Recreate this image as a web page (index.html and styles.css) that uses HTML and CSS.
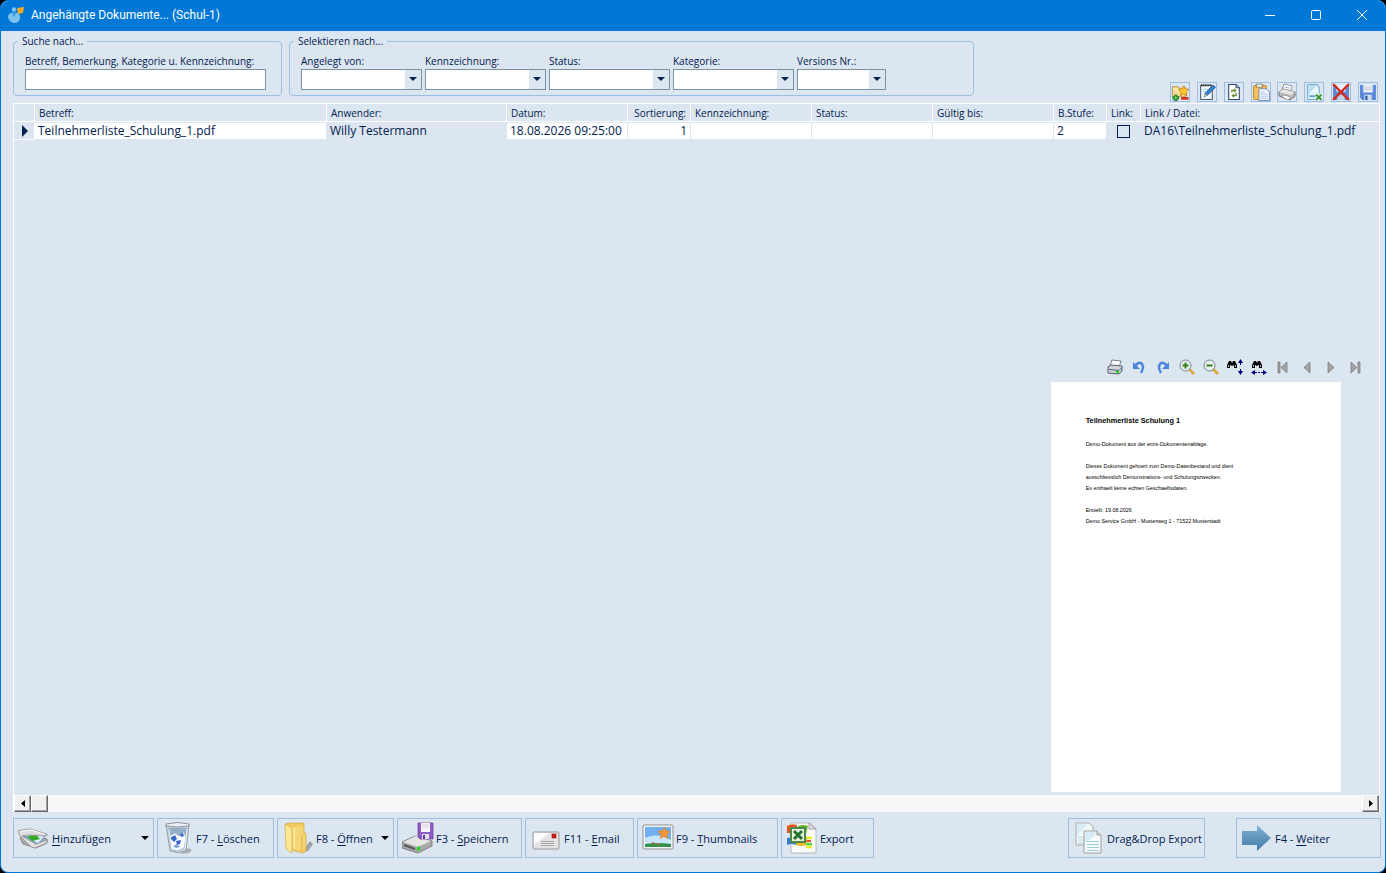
FILE: index.html
```
<!DOCTYPE html>
<html lang="de">
<head>
	<meta charset="utf-8">
	<title>Angehängte Dokumente... (Schul-1)</title>
	<link rel="stylesheet" href="styles.css">
</head>
<body>
<div class="window">
	<header class="titlebar">
		<svg class="app-icon" width="16" height="16" viewBox="0 0 16 16">
			<circle cx="6" cy="2.500" r="2.200" fill="#7cc3f0"/>
			<path d="M0 10Q0 5.500 6 5.500Q12 5.500 12 10Q12 16 6 16Q1 15 0 10Z" fill="#7cc3f0"/>
			<path d="M4 6l2 4 2-4z" fill="#3c9be0"/>
			<path d="M9 1l7-1-1 6-5 1z" fill="#f5a81c"/>
		</svg>
		<h1>Angehängte Dokumente... (Schul-1)</h1>
		<button class="win-btn" aria-label="Minimieren"><svg width="10" height="10"><path d="M0 5.500h10" stroke="#fff"/></svg></button>
		<button class="win-btn" aria-label="Maximieren"><svg width="10" height="10"><rect x=".5" y=".5" width="9" height="9" rx="1" fill="none" stroke="#fff"/></svg></button>
		<button class="win-btn" aria-label="Schließen"><svg width="10" height="10"><path d="M0 0l10 10M10 0L0 10" stroke="#fff"/></svg></button>
	</header>

	<div class="top">
		<fieldset class="search">
			<legend>Suche nach...</legend>
			<div class="field">
				<label for="suche">Betreff, Bemerkung, Kategorie u. Kennzeichnung:</label>
				<input type="text" id="suche">
			</div>
		</fieldset>
		<fieldset class="filter">
			<legend>Selektieren nach...</legend>
			<div class="field">
				<label for="angelegt">Angelegt von:</label>
				<div class="combo"><select id="angelegt"><option></option></select></div>
			</div>
			<div class="field">
				<label for="kennz">Kennzeichnung:</label>
				<div class="combo"><select id="kennz"><option></option></select></div>
			</div>
			<div class="field">
				<label for="status">Status:</label>
				<div class="combo"><select id="status"><option></option></select></div>
			</div>
			<div class="field">
				<label for="kategorie">Kategorie:</label>
				<div class="combo"><select id="kategorie"><option></option></select></div>
			</div>
			<div class="field small">
				<label for="version">Versions Nr.:</label>
				<div class="combo"><select id="version"><option></option></select></div>
			</div>
		</fieldset>
		<div class="tools">
			<button aria-label="Favorit">
				<svg width="18" height="18" viewBox="0 0 17 17">
					<path d="M1.500 3.500h5l1 1.500h6v8h-12z" fill="#f7dc96" stroke="#b49a5a"/>
					<path d="M2 6h9" stroke="#fff3c8"/>
					<path d="M12 2.500l1.500 3 3.500.5-2.500 2.500.5 3.500-3-1.700-3 1.700.5-3.500-2.500-2.500 3.500-.5z" fill="#ffc52e" stroke="#c98516" stroke-width=".8"/>
					<path d="M4.500 11v6M1.500 14h6" stroke="#187a1c" stroke-width="3"/><path d="M4.500 12v4M2.500 14h4" stroke="#7ed66b"/>
					<path d="M9.500 14.500h7" stroke="#d8321c" stroke-width="2.500"/>
				</svg>
			</button>
			<button aria-label="Bearbeiten">
				<svg width="18" height="18" viewBox="0 0 17 17">
					<rect x="2.500" y="2.500" width="11" height="13" fill="#f4faff" stroke="#4c5a66"/>
					<path d="M3 2h10" stroke="#333" stroke-width="2" stroke-dasharray="1 1"/>
					<path d="M5 6h6M5 8h4M5 10h3" stroke="#a9d1e6"/>
					<path d="M6 13l1-3.500L14 2l2.500 2L9 11.500z" fill="#3583cf" stroke="#164c86" stroke-width=".7"/><path d="M6 13l.7-2.500L8.500 12z" fill="#f0cf90"/>
				</svg>
			</button>
			<button aria-label="Aktualisieren">
				<svg width="18" height="18" viewBox="0 0 17 17">
					<path d="M3.500 1.500h7l3 3v11h-10z" fill="#fff" stroke="#2e4561"/><path d="M10.500 1.500v3h3" fill="#bad0e5" stroke="#2e4561"/>
					<path d="M6.500 9V7H9M10.500 9v3H8" fill="none" stroke="#628824" stroke-width="1.200"/><path d="M8.500 5L11 7 8.500 9zM8.500 10L6 12l2.500 2z" fill="#628824"/>
				</svg>
			</button>
			<button aria-label="Einfügen">
				<svg width="18" height="18" viewBox="0 0 17 17">
					<rect x="1.500" y="2.500" width="12" height="13" rx="1" fill="#f4c15a" stroke="#c58f2b"/>
					<rect x="4" y="1" width="6" height="3" fill="#e6e6e6" stroke="#8b8062" stroke-width=".8"/>
					<path d="M6.500 5.500h7l3 3v8h-10z" fill="#f2f7ff" stroke="#6881ad" stroke-width=".8"/><path d="M8 8.500h4M8 10.500h7M8 12.500h7M8 14.500h7" stroke="#a9bee0" stroke-width=".8"/>
				</svg>
			</button>
			<button aria-label="Drucken">
				<svg width="18" height="18" viewBox="0 0 18 18">
					<path d="M6 1l8 2-2 7-8-3z" fill="#fff" stroke="#8f969c"/>
					<path d="M1 9l4-3 12 3v4l-5 4L1 13z" fill="#bcbcbc" stroke="#6d6d6d"/><path d="M1 9l4-3 12 3-4 3z" fill="#e4e4e4"/>
					<path d="M3 13l3-1 7 2-3 3z" fill="#fff" stroke="#888" stroke-width=".7"/><path d="M6.500 4l5 1M6 6l5 1" stroke="#a5adb5"/>
				</svg>
			</button>
			<button aria-label="Excel Export">
				<svg width="18" height="18" viewBox="0 0 17 17">
					<path d="M2.500 1.500h9l2 3v11h-11z" fill="#e8f6fd" stroke="#7ba9c9"/><path d="M3 2h8L3 11z" fill="#b8dff4"/>
					<path d="M4 12.500h6" stroke="#62a4cf" stroke-width="2"/><rect x="10" y="10" width="6" height="6" fill="#d9efd2"/>
					<path d="M10.500 11l5 5M15.500 11l-5 5" stroke="#3b9136" stroke-width="1.800"/>
				</svg>
			</button>
			<button aria-label="Verwerfen">
				<svg width="18" height="18" viewBox="0 0 17 17">
					<path d="M1 2h15v14H3l-2-2z" fill="#5b88d8"/><path d="M4 2h9v6H4z" fill="#e9edf5"/><path d="M5 11h7v5H5z" fill="#c4d0e5"/>
					<path d="M1 1l15 15M16 1L1 16" stroke="#d22d20" stroke-width="2.200"/>
				</svg>
			</button>
			<button aria-label="Speichern">
				<svg width="18" height="18" viewBox="0 0 17 17">
					<path d="M1 2h15v14H3l-2-2z" fill="#5b88d8"/><path d="M4 2h9v7H4z" fill="#e9edf5"/><path d="M5 4h7M5 6h7" stroke="#c6cbd5"/><path d="M5 11h7v5H5z" fill="#d4dceb"/><path d="M6 12h2v4H6z" fill="#2a55a5"/>
				</svg>
			</button>
		</div>
	</div>

	<main class="grid">
		<table>
			<colgroup>
				<col class="c-mark"><col class="c-betreff"><col class="c-anwender"><col class="c-mid"><col class="c-sort"><col class="c-mid"><col class="c-mid"><col class="c-mid"><col class="c-stufe"><col class="c-link"><col>
			</colgroup>
			<thead>
				<tr>
					<th></th><th>Betreff:</th><th>Anwender:</th><th>Datum:</th><th class="num">Sortierung:</th><th>Kennzeichnung:</th><th>Status:</th><th>Gültig bis:</th><th>B.Stufe:</th><th>Link:</th><th>Link / Datei:</th>
				</tr>
			</thead>
			<tbody>
				<tr>
					<td class="mark"><svg width="6" height="12"><path d="M0 0l6 6-6 6z" fill="#00204f"/></svg></td>
					<td class="edit">Teilnehmerliste_Schulung_1.pdf</td>
					<td>Willy Testermann</td>
					<td class="edit">18.08.2026 09:25:00</td>
					<td class="edit num">1</td>
					<td class="edit"></td>
					<td class="edit"></td>
					<td class="edit"></td>
					<td class="edit">2</td>
					<td class="check"><input type="checkbox" aria-label="Link"></td>
					<td>DA16\Teilnehmerliste_Schulung_1.pdf</td>
				</tr>
			</tbody>
		</table>

		<section class="preview">
			<div class="preview-tools">
				<button aria-label="Drucken"><svg width="16" height="16" viewBox="0 0 16 16"><path d="M5 1l9 1-2 6-9-1z" fill="#fff" stroke="#7b8188"/><path d="M1 8l3-2 11 1v5l-3 3-11-1z" fill="#d0d5da" stroke="#59606a"/><path d="M2 10.500l10 1 3-3" fill="none" stroke="#59606a"/><path d="M9 12h3v2H9z" fill="#25d51e"/></svg></button>
				<button aria-label="Links drehen"><svg width="16" height="16" viewBox="0 0 16 16"><path d="M4 7q3-4 6-3 4 3 0 10" fill="none" stroke="#4a84dc" stroke-width="2.400"/><path d="M2 3v7h7z" fill="#4a84dc"/></svg></button>
				<button aria-label="Rechts drehen"><svg width="16" height="16" viewBox="0 0 16 16"><path d="M12 7q-3-4-6-3-4 3 0 10" fill="none" stroke="#4a84dc" stroke-width="2.400"/><path d="M14 3v7H7z" fill="#4a84dc"/></svg></button>
				<button aria-label="Vergrößern"><svg width="16" height="16" viewBox="0 0 16 16"><path d="M10 10l5 5" stroke="#d9a945" stroke-width="3"/><circle cx="6.500" cy="6.500" r="5.500" fill="#e6f1ef" stroke="#788289"/><path d="M6.500 3.500v6M3.500 6.500h6" stroke="#36811e" stroke-width="2"/></svg></button>
				<button aria-label="Verkleinern"><svg width="16" height="16" viewBox="0 0 16 16"><path d="M10 10l5 5" stroke="#d9a945" stroke-width="3"/><circle cx="6.500" cy="6.500" r="5.500" fill="#e6f1ef" stroke="#788289"/><path d="M3.500 6.500h6" stroke="#36811e" stroke-width="2"/></svg></button>
				<button aria-label="Ganze Seite"><svg width="16" height="16" viewBox="0 0 16 16"><path d="M0 9V6l2-4h2l1 2 1-2h2l2 4v3H7V6L5 7 3 6v3z" fill="#000"/><path d="M1.500 6v2M8.500 6v2" stroke="#fff" stroke-width=".7"/><path d="M13.500 1v5M13.500 10v5" stroke="#00007c"/><path d="M11 4h5l-2.500-4zM11 12h5l-2.500 4z" fill="#00007c"/></svg></button>
				<button aria-label="Seitenbreite"><svg width="16" height="16" viewBox="0 0 16 16"><path d="M1 9V6l2-4h2l1 2 1-2h2l2 4v3H8V6L6 7 4 6v3z" fill="#000"/><path d="M2.500 6v2M9.500 6v2" stroke="#fff" stroke-width=".7"/><path d="M2 13.500h12" stroke="#00007c" stroke-dasharray="4 1 2 1"/><path d="M4 11v5l-4-2.500zM12 11v5l4-2.500z" fill="#00007c"/></svg></button>
				<button aria-label="Erste Seite"><svg width="16" height="16" viewBox="0 0 16 16"><path d="M3 3h2v11H3zM12 3v11L6 8.500z" fill="#a5a5a5" stroke="#666" stroke-width=".6"/></svg></button>
				<button aria-label="Vorherige Seite"><svg width="16" height="16" viewBox="0 0 16 16"><path d="M11 3v11L5 8.500z" fill="#a5a5a5" stroke="#666" stroke-width=".6"/></svg></button>
				<button aria-label="Nächste Seite"><svg width="16" height="16" viewBox="0 0 16 16"><path d="M5 3v11l6-5.500z" fill="#a5a5a5" stroke="#666" stroke-width=".6"/></svg></button>
				<button aria-label="Letzte Seite"><svg width="16" height="16" viewBox="0 0 16 16"><path d="M11 3h2v11h-2zM4 3v11l6-5.500z" fill="#a5a5a5" stroke="#666" stroke-width=".6"/></svg></button>
			</div>
			<!-- A4 page in points, scaled to the preview width -->
			<svg class="page" viewBox="0 0 595 842">
				<text class="page-title" x="71" y="85">Teilnehmerliste Schulung 1</text>
				<text x="71" y="132">Demo-Dokument aus der emis-Dokumentenablage.</text>
				<text x="71" y="177">Dieses Dokument gehoert zum Demo-Datenbestand und dient</text>
				<text x="71" y="200">ausschliesslich Demonstrations- und Schulungszwecken.</text>
				<text x="71" y="222">Es enthaelt keine echten Geschaeftsdaten.</text>
				<text x="71" y="267">Erstellt: 19.08.2026</text>
				<text x="71" y="290">Demo Service GmbH - Musterweg 1 - 71522 Musterstadt</text>
			</svg>
		</section>

		<div class="scrollbar">
			<button aria-label="Nach links"><svg width="4" height="7"><path d="M4 0v7L0 3.500z"/></svg></button>
			<div class="thumb"></div>
			<button class="right" aria-label="Nach rechts"><svg width="4" height="7"><path d="M0 0v7l4-3.500z"/></svg></button>
		</div>
	</main>

	<footer class="actions">
		<button class="b-add">
			<svg width="32" height="32" viewBox="0 0 32 32">
				<path d="M2 16l10-4 17 5v4l-11 5L5 22z" fill="#aaa" stroke="#888"/>
				<path d="M4 12l24 1-8 9z" fill="#ddecf8" stroke="#4e9bd8"/>
				<path d="M9 14l9-1 4 4-8 2z" fill="#35a829"/>
				<path d="M0 9q1-1 12-2l17 5q1 2-2 2L11 13 4 14 18 22 29 18v3l-12 5-4-1L2 14z" fill="#dedede" stroke="#8b8b8b" stroke-width=".8"/>
				<path d="M3 9l10-1 13 4" fill="none" stroke="#fafafa"/>
			</svg>
			<span><u>H</u>inzufügen</span><i class="drop"></i>
		</button>
		<button class="b-delete">
			<svg width="32" height="32" viewBox="0 0 32 32">
				<path d="M26 26l4 2-3 3-9 1z" fill="#777" opacity=".5"/>
				<path d="M4 3h23l-3 26q-8 3-16 0z" fill="#c3cfda" stroke="#8a959e" stroke-width=".8"/><path d="M6 6h19l-1 10H8z" fill="#93aec5"/><path d="M4 2q12-3 23 0v2q-11 2-23 0z" fill="#e8eff4" stroke="#73808a" stroke-width=".8"/>
				<path d="M8 14l5-3 4 3 5-4 2 6-2 10-7 3-6-2z" fill="#f8fbff" stroke="#a1b5cb" stroke-width=".7"/><path d="M8 16l5-3 2 4-3 3zM14 19l5-1-1 4-3 1zM18 12l3-1 1 3-3 1z" fill="#3866c5"/><path d="M11 24l4-2 3 3-4 1z" fill="#7f9ddb"/><path d="M7 7l3 20M25 7l-2 20" stroke="#eef5fa"/>
			</svg>
			<span>F7 - <u>L</u>öschen</span>
		</button>
		<button class="b-open">
			<svg width="32" height="32" viewBox="0 0 32 32">
				<path d="M20 30l8-11 3 3-5 7z" fill="#777" opacity=".6"/><path d="M3 2l4-1h15v9l2 2v17l-3 2-12-3z" fill="#f2cc61" stroke="#d2a640" stroke-width=".7"/><path d="M3 2l7 4v25l-6-4z" fill="#fce795" stroke="#d6ac43" stroke-width=".7"/><path d="M11 5h10v7l2 2v14H11z" fill="#f6d777"/><path d="M12 6v20" stroke="#fff6c6"/><path d="M20 12v17" stroke="#dcb34c"/>
			</svg>
			<span>F8 - <u>Ö</u>ffnen</span><i class="drop"></i>
		</button>
		<button class="b-save">
			<svg width="32" height="32" viewBox="0 0 32 32">
				<path d="M0 20l13-6 17 5v5l-14 7L0 26z" fill="#aaa" stroke="#707070" stroke-width=".8"/><path d="M1 20l13-6 15 5-13 6z" fill="#e5e5e5"/><path d="M2 23l11 4" stroke="#555" stroke-width="2"/><path d="M15 25l3-1v4l-3 1z" fill="#26d61f"/>
				<path d="M16 1h15v16H18l-2-2z" fill="#8d5cc6" stroke="#6c449f" stroke-width=".8"/><path d="M19 1h9v9h-9z" fill="#f5f3f8"/><path d="M20 3h7M20 5h7" stroke="#d9cfe6"/><path d="M20 12h7v5h-7z" fill="#e3dfe9"/><path d="M21 13h2v4h-2z" fill="#604095"/>
			</svg>
			<span>F3 - <u>S</u>peichern</span>
		</button>
		<button class="b-mail">
			<svg width="32" height="32" viewBox="0 0 32 32">
				<rect x="3" y="10" width="26" height="17" rx="1" fill="#e4e2e4" stroke="#9b9b9b"/><path d="M4 11h16L4 23z" fill="#fbfbfb"/><rect x="22" y="12" width="4" height="4" fill="#d81a1a" stroke="#9b1515" stroke-width=".6"/><path d="M11 19.500h13M11 21.500h13M11 23.500h13" stroke="#999" stroke-width=".8"/>
			</svg>
			<span>F11 - <u>E</u>mail</span>
		</button>
		<button class="b-thumb">
			<svg width="32" height="32" viewBox="0 0 32 32">
				<rect x="1" y="3" width="30" height="24" rx="1" fill="#f4f4f4" stroke="#929292"/><rect x="3" y="5" width="26" height="20" fill="#70b0f0"/><path d="M3 16q12-6 26 2v4H3z" fill="#c9e7fb"/><path d="M3 22q12-2 26 0v3H3z" fill="#35904b"/><path d="M23 5l1 4 4 .5-3 3 1 4-4-2-4 2 1-4-3-3 4-.5z" fill="#f79634" stroke="#e1701a" stroke-width=".5"/><circle cx="11" cy="21" r="1" fill="#d8422f"/><circle cx="16" cy="22" r="1" fill="#e86a4f"/>
			</svg>
			<span>F9 - <u>T</u>humbnails</span>
		</button>
		<button class="b-export">
			<svg width="32" height="32" viewBox="0 0 32 32">
				<path d="M5 1h18l7 6v24H5z" fill="#fbfbfb" stroke="#aaa" stroke-width=".8"/><path d="M23 1v6h7z" fill="#ddd" stroke="#888" stroke-width=".7"/><path d="M20 16h6M20 25h6" stroke="#e8ee26" stroke-width="2.500"/><path d="M20 19h5" stroke="#f04c36" stroke-width="2"/><path d="M20 22h6" stroke="#51d935" stroke-width="2.500"/>
				<path d="M1 4q5-3 10-1v8H1z" fill="#e45524"/><path d="M12 4q5-2 10 0l-2 8h-9z" fill="#68b52e"/><path d="M1 16l9-1v8q-5-2-9 0z" fill="#3679d0"/><path d="M10 16h11l-1 7q-5 2-10 0z" fill="#f2b822"/>
				<rect x="5" y="6" width="14" height="14" fill="#e8f2df" stroke="#4b884a" stroke-width="2"/><path d="M8 9l8 8M16 9l-8 8" stroke="#21732f" stroke-width="3"/>
			</svg>
			<span>Export</span>
		</button>
		<button class="b-drag">
			<svg width="32" height="32" viewBox="0 0 32 32">
				<path d="M3 1h13l4 4v18H3z" fill="#f1f8fa" stroke="#aaa"/><path d="M4 2h10L4 14z" fill="#d5ebf5"/><path d="M5 15h8M5 18h8M5 21h8" stroke="#add6e0"/>
				<path d="M11 9h13l4 4v18H11z" fill="#f7fbfc" stroke="#9e9e9e"/><path d="M24 9v4h4" fill="#ddd" stroke="#999"/><path d="M12 10h11l-1 4-10 7z" fill="#d5ebf5"/><path d="M14 19.500h12M14 22.500h12M14 25.500h12M14 28.500h12" stroke="#99ceda"/>
			</svg>
			<span>Drag&amp;Drop Export</span>
		</button>
		<button class="b-next">
			<svg width="32" height="32" viewBox="0 0 32 32">
				<defs><linearGradient id="arrow" x1="0" y1="0" x2="0" y2="1"><stop offset="0" stop-color="#84b2d2"/><stop offset="1" stop-color="#3f7ba8"/></linearGradient></defs>
				<path d="M1 9h15V3l14 13-14 13v-6H1z" fill="url(#arrow)"/>
			</svg>
			<span>F4 - <u>W</u>eiter</span>
		</button>
	</footer>
</div>
</body>
</html>
```
FILE: styles.css
```
* {
	box-sizing: border-box;
	margin: 0;
	padding: 0;
}

body {
	font-family: 'Open Sans', 'Noto Sans', sans-serif;
	font-size: 10px;
	color: #00204f;
	background-color: #000;
}

svg {
	display: block;
	flex-shrink: 0;
}

button {
	font: inherit;
	color: inherit;
	background: none;
	border: none;
	display: flex;
	align-items: center;
}

.window {
	min-height: 100vh;
	display: flex;
	flex-direction: column;
	background-color: #dce6f0;
	border: 1px solid #0078d7;
	border-radius: 8px;
	overflow: hidden;
}

.titlebar {
	height: 30px;
	flex-shrink: 0;
	display: flex;
	align-items: center;
	background-color: #0078d7;
	padding: 0 0 2px 7px;
}

.titlebar h1 {
	flex: 1;
	margin-left: 7px;
	font: 12px Roboto, sans-serif;
	color: #fff;
}

.win-btn {
	width: 46px;
	height: 28px;
	justify-content: center;
}

/* search and filter */
.top {
	display: flex;
	align-items: flex-start;
	padding: 3px 4px 0 12px;
	height: 72px;
}

fieldset {
	border: 1px solid #9dbfe3;
	border-radius: 4px;
	height: 62px;
	padding: 6px 11px 0;
	display: flex;
	gap: 3px;
}

legend {
	line-height: 14px;
	padding: 0 4px;
	margin-left: -7px;
}

.search {
	width: 269px;
	margin-right: 7px;
}

.filter {
	width: 685px;
}

.field {
	width: 121px;
}

.search .field {
	width: 241px;
}

.field.small {
	width: 89px;
}

.field label {
	display: block;
	line-height: 15px;
	white-space: nowrap;
}

.field input,
.field select {
	display: block;
	width: 100%;
	height: 21px;
	border: 1px solid #7b929f;
	border-radius: 0;
	background-color: #fff;
	font: inherit;
	color: inherit;
}

.combo {
	position: relative;
}

.combo select {
	appearance: none;
	background-image: linear-gradient(#dce6f0, #dce6f0);
	background-size: 16px 100%;
	background-position: right;
	background-repeat: no-repeat;
}

.combo::after {
	content: "";
	position: absolute;
	right: 5px;
	top: 8px;
	border: 4px solid transparent;
	border-top-color: #00204f;
	border-bottom: none;
	pointer-events: none;
}

.tools {
	width: 208px;
	margin-left: auto;
	margin-right: 3px;
	margin-bottom: 1px;
	align-self: flex-end;
	display: flex;
	justify-content: space-between;
}

.tools button {
	width: 20px;
	height: 20px;
	border: 1px solid #9dbfe3;
	justify-content: center;
}

/* document list */
.grid {
	flex: 1;
	display: flex;
	flex-direction: column;
	margin: 0 5px 0 12px;
	border: 1px solid #fff;
	border-bottom: none;
}

table {
	width: 100%;
	table-layout: fixed;
	border-collapse: separate;
	border-spacing: 0;
}

.c-mark { width: 21px; }
.c-betreff { width: 292px; }
.c-anwender { width: 180px; }
.c-mid { width: 121px; }
.c-sort { width: 63px; }
.c-stufe { width: 53px; }
.c-link { width: 34px; }

th {
	height: 18px;
	font-weight: normal;
	line-height: 16px;
	text-align: left;
	padding: 0 4px;
	border-right: 1px solid #fff;
	border-bottom: 1px solid #fff;
	white-space: nowrap;
}

th:last-child {
	border-right: none;
}

td {
	height: 18px;
	font-size: 12px;
	line-height: 16px;
	padding: 0 3px;
	border: 1px solid #dce6f0;
	border-left: none;
	white-space: nowrap;
}

.edit {
	background-color: #fff;
}

.num {
	text-align: right;
}

.mark {
	padding-left: 8px;
	border-right-color: #fff;
	border-bottom-color: #fff;
}

.check input {
	appearance: none;
	display: block;
	width: 13px;
	height: 13px;
	margin: 0 auto;
	border: 1px solid #00204f;
}

/* document preview */
.preview {
	margin-top: auto;
	margin-bottom: 3px;
	display: flex;
	flex-direction: column;
	align-items: flex-end;
}

.preview-tools {
	display: flex;
	gap: 8px;
	padding: 0 16px 7px 0;
}

.page {
	width: 290px;
	height: 410px;
	margin-right: 38px;
	background-color: #fff;
	font-family: 'Liberation Sans', Arial, sans-serif;
}

.page text {
	font-size: 11px;
	fill: #000;
}

.page .page-title {
	font-size: 15px;
	font-weight: bold;
}

.scrollbar {
	display: flex;
	height: 17px;
	background: repeating-conic-gradient(#fff 0 25%, #f0f0f0 0 50%) 0 0 / 2px 2px;
}

.scrollbar button,
.thumb {
	width: 17px;
	background-color: #f0f0f0;
	border: 1px solid;
	border-color: #fff #696969 #696969 #fff;
	box-shadow: inset -1px -1px #a0a0a0;
	justify-content: center;
}

.scrollbar .right {
	margin-left: auto;
}

/* bottom buttons */
.actions {
	display: flex;
	gap: 3px;
	padding: 6px 4px 14px 12px;
}

.actions button {
	height: 40px;
	padding: 0 4px;
	border: 1px solid #9dbfe3;
	font-size: 11px;
	white-space: nowrap;
}

.actions span {
	margin-left: 2px;
}

.actions u {
	text-underline-offset: 2px;
}

.drop {
	margin-left: auto;
	border: 4px solid transparent;
	border-top-color: #000;
	border-bottom: none;
}

.b-add { width: 141px; }
.b-delete { width: 117px; }
.b-open { width: 117px; }
.b-save { width: 125px; }
.b-mail { width: 109px; }
.b-thumb { width: 141px; }
.b-export { width: 93px; }

.b-drag {
	width: 137px;
	margin-left: auto;
	margin-right: 28px;
}

.b-next { width: 145px; }
```
